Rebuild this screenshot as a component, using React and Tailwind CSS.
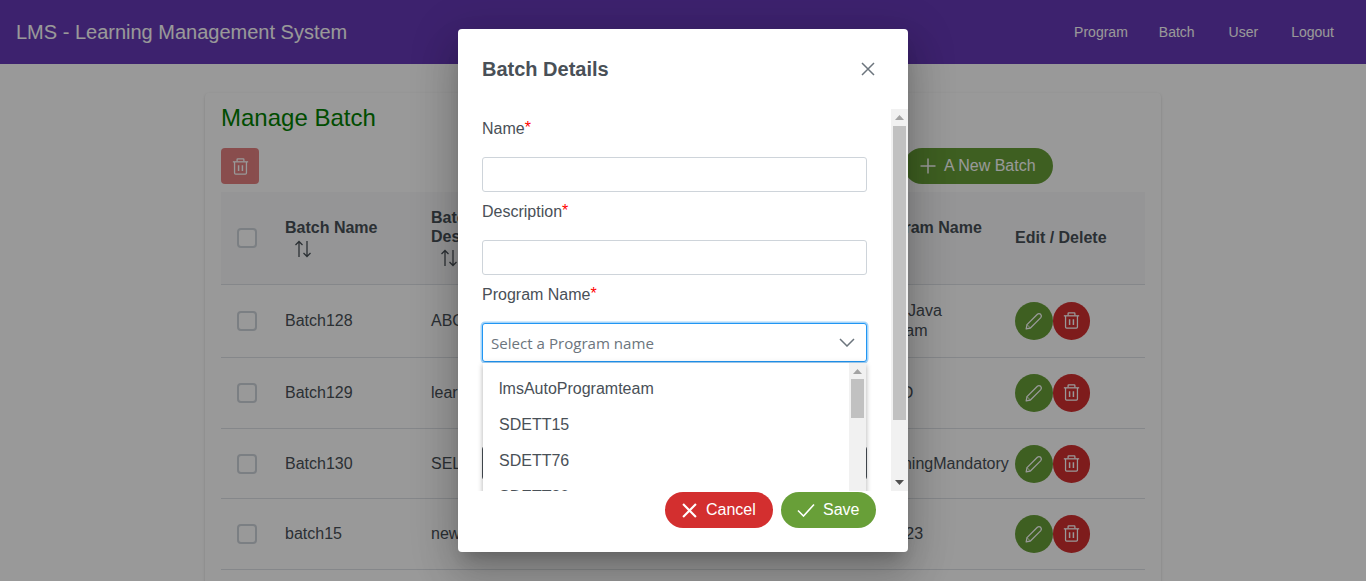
const PencilIcon = () => (
  <svg width="18" height="18" viewBox="0 0 18 18" fill="none" stroke="currentColor" strokeWidth="1.3" strokeLinejoin="round">
    <path d="M1.2 16.8 L2 12.6 L12.4 2.2 Q14 0.9 15.7 2.3 Q17.1 4 15.8 5.6 L5.4 16 Z" />
    <path d="M2 12.6 L5.4 16" strokeWidth="0.8" />
  </svg>
);

const TrashIcon = ({ size = 17 }) => (
  <svg width={size} height={size} viewBox="0 0 16 16" fill="none" stroke="currentColor" strokeWidth="1.2">
    <path d="M0.8 3.6 H15.2" />
    <path d="M4.8 3.4 V1.4 Q4.8 0.8 5.4 0.8 H10.6 Q11.2 0.8 11.2 1.4 V3.4" />
    <path d="M2.4 3.8 V14.2 Q2.4 15.2 3.4 15.2 H12.6 Q13.6 15.2 13.6 14.2 V3.8" />
    <path d="M6.2 6.8 V12.2 M9.8 6.8 V12.2" strokeWidth="1.4" />
  </svg>
);

const SortIcon = () => (
  <svg width="18" height="18" viewBox="0 0 18 18" fill="none" stroke="currentColor" strokeWidth="1.3">
    <path d="M5 17 V1.5 M1.5 5 L5 1.5 L8.5 5" />
    <path d="M13 1 V16.5 M9.5 13 L13 16.5 L16.5 13" />
  </svg>
);

const XIcon = ({ size = 14, width = 1.5 }) => (
  <svg width={size} height={size} viewBox="0 0 14 14" fill="none" stroke="currentColor" strokeWidth={width}>
    <path d="M1 1 L13 13 M13 1 L1 13" />
  </svg>
);

const Checkbox = () => (
  <div className="w-5 h-5 rounded-[4px] border-2 border-[#ced4da] bg-white" />
);

const ActionButtons = () => (
  <div className="flex items-center">
    <button className="w-[38px] h-[38px] rounded-full bg-[#689f38] text-white flex items-center justify-center">
      <PencilIcon />
    </button>
    <button className="w-[37px] h-[38px] rounded-full bg-[#d32f2f] text-white flex items-center justify-center">
      <TrashIcon />
    </button>
  </div>
);

const rows = [
  { name: "Batch128", desc: "ABC", status: "Active", classes: "5", program: <>Adv Java<br />Stream</>, h: "h-[73px]" },
  { name: "Batch129", desc: "learn", status: "Active", classes: "6", program: "MOD", h: "h-[71px]" },
  { name: "Batch130", desc: "SELENIUM", status: "Active", classes: "8", program: "TrainingMandatory", h: "h-[70px] [&>td]:pt-px" },
  { name: "batch15", desc: "new", status: "Active", classes: "4", program: "Test23", h: "h-[71px]" },
  { name: "batch16", desc: "new", status: "Active", classes: "4", program: "Test23", h: "h-[71px]" },
];

const Field = ({ label, children }) => (
  <div>
    <label className="block h-12 pt-[10px] leading-[18px]">
      {label}
      <span className="text-[#ff0000] align-[1px]">*</span>
    </label>
    {children}
  </div>
);

const Arrow = ({ up }) => (
  <svg width="9" height="5" viewBox="0 0 9 5" className={up ? "fill-[#a3a3a3]" : "fill-[#505050]"}>
    <path d={up ? "M0 5 L4.5 0 L9 5 Z" : "M0 0 L9 0 L4.5 5 Z"} />
  </svg>
);

export default function App() {
  return (
    <div className="relative h-[581px] overflow-hidden bg-white font-['Liberation_Sans',Arial,sans-serif] text-[#495057]">
      <nav className="h-16 bg-[#673ab7] flex items-center justify-between pl-4 pr-4 text-white">
        <div className="text-xl leading-none">LMS - Learning Management System</div>
        <div className="flex text-[14px]">
          <a className="px-4 -mr-px">Program</a>
          <a className="px-4 mr-[2px]">Batch</a>
          <a className="px-4 mr-px">User</a>
          <a className="px-4">Logout</a>
        </div>
      </nav>

      <main className="pt-[29px] flex justify-center">
        <section className="w-[956px] bg-white rounded-[4px] shadow-[0_2px_1px_-1px_rgba(0,0,0,0.2),0_1px_1px_0_rgba(0,0,0,0.14),0_1px_3px_0_rgba(0,0,0,0.12)] p-4">
          <h1 className="text-2xl leading-[18px] text-[#008000] h-[39px]">Manage Batch</h1>
          <div className="flex items-center h-9 mb-2">
            <button className="w-[38px] h-9 rounded-[4px] bg-[#d32f2f] text-white opacity-60 flex items-center justify-center">
              <TrashIcon />
            </button>
            <button className="ml-[645px] w-[149px] h-9 rounded-full bg-[#689f38] text-white flex items-center pl-4">
              <svg width="16" height="16" viewBox="0 0 16 16" fill="none" stroke="currentColor" strokeWidth="1.5">
                <path d="M8 0.5 V15.5 M0.5 8 H15.5" />
              </svg>
              <span className="ml-2">A New Batch</span>
            </button>
          </div>

          <table className="w-[924px] table-fixed border-collapse">
            <colgroup>
              <col className="w-[48px]" />
              <col className="w-[146px]" />
              <col className="w-[150px]" />
              <col className="w-[120px]" />
              <col className="w-[175px]" />
              <col className="w-[139px]" />
              <col className="w-[146px]" />
            </colgroup>
            <thead>
              <tr className="h-[92px] bg-[#f8f9fa] border-b border-[#dee2e6] text-left font-bold leading-[19px]">
                <th className="pl-4"><Checkbox /></th>
                <th className="pl-4 font-bold">Batch Name<span className="block ml-[9px] mt-[3px]"><SortIcon /></span></th>
                <th className="pl-4 pr-4 font-bold">Batch Description<span className="block ml-[9px] mt-[3px]"><SortIcon /></span></th>
                <th className="pl-4 pr-4 font-bold">Batch Status<span className="block ml-[9px] mt-[3px]"><SortIcon /></span></th>
                <th className="pl-4 pr-4 font-bold">No Of Classes<span className="block ml-[9px] mt-[3px]"><SortIcon /></span></th>
                <th className="pl-2 font-bold whitespace-nowrap">Program Name<span className="block ml-[9px] mt-[3px]"><SortIcon /></span></th>
                <th className="pl-4 font-bold">Edit / Delete</th>
              </tr>
            </thead>
            <tbody>
              {rows.map((r) => (
                <tr key={r.name} className={`${r.h} border-b border-[#dee2e6]`}>
                  <td className="pl-4"><Checkbox /></td>
                  <td className="pl-4">{r.name}</td>
                  <td className="pl-4">{r.desc}</td>
                  <td className="pl-4">{r.status}</td>
                  <td className="pl-4">{r.classes}</td>
                  <td className="pl-4 leading-5">{r.program}</td>
                  <td className="pl-4"><ActionButtons /></td>
                </tr>
              ))}
            </tbody>
          </table>
        </section>
      </main>

      <div className="absolute inset-0 bg-black/40 flex items-center justify-center">
        <div className="w-[450px] h-[523px] bg-white rounded-[4px] shadow-[0_11px_15px_-7px_rgba(0,0,0,0.2),0_24px_38px_3px_rgba(0,0,0,0.14),0_9px_46px_8px_rgba(0,0,0,0.12)] flex flex-col">
          <header className="h-20 shrink-0 flex items-center justify-between pl-6 pr-[33px]">
            <h2 className="text-xl font-bold">Batch Details</h2>
            <span className="text-[#6c757d]"><XIcon /></span>
          </header>

          <div className="relative flex-1 min-h-0 overflow-hidden pl-6 pr-[41px]">
            <Field label="Name">
              <input className="block w-full h-[35px] rounded-[3px] border border-[#ced4da] bg-white" />
            </Field>
            <Field label="Description">
              <input className="block w-full h-[35px] rounded-[3px] border border-[#ced4da] bg-white" />
            </Field>
            <Field label="Program Name">
              <div className="h-[39px] rounded-[3px] border border-[#2196f3] shadow-[0_0_0_1.5px_#a6d5fa] bg-white flex items-center justify-between pl-2 pr-[11px]">
                <span className="font-['Open_Sans',sans-serif] text-[15.1px] pt-px text-[#6c757d]">Select a Program name</span>
                <svg width="16" height="9" viewBox="0 0 16 9" fill="none" stroke="#6c757d" strokeWidth="1.5">
                  <path d="M1 1 L8 8 L15 1" />
                </svg>
              </div>
            </Field>
            <div className="mt-[84px] h-[34px] rounded-[3px] border border-[#495057]" />

            <div className="absolute left-[25px] top-[254px] w-[383px] h-[200px] bg-white shadow-[0_3px_5px_rgba(0,0,0,0.2),0_0_6px_rgba(0,0,0,0.14)]">
              <ul className="pt-2">
                <li className="h-9 pl-4 flex items-center">lmsAutoProgramteam</li>
                <li className="h-9 pl-4 flex items-center">SDETT15</li>
                <li className="h-9 pl-4 flex items-center">SDETT76</li>
                <li className="h-9 pl-4 flex items-center">SDETT80</li>
              </ul>
              <div className="absolute right-0 top-0 bottom-0 w-[17px] bg-[#f1f1f1]">
                <div className="flex justify-center pt-[6px]"><Arrow up /></div>
                <div className="absolute left-[2px] top-[16px] w-[13px] h-[39px] bg-[#c1c1c1]" />
              </div>
            </div>

            <div className="absolute right-0 top-0 bottom-0 w-[17px] bg-[#f1f1f1]">
              <div className="flex justify-center pt-[6px]"><Arrow up /></div>
              <div className="absolute left-[2px] top-[17px] w-[13px] h-[294px] bg-[#c1c1c1]" />
              <div className="absolute left-0 right-0 bottom-[6px] flex justify-center"><Arrow /></div>
            </div>
          </div>

          <footer className="h-[61px] shrink-0 flex justify-end gap-2 pt-px pr-8">
            <button className="w-[108px] h-9 rounded-full bg-[#d32f2f] text-white flex items-center pl-[17px]">
              <XIcon size={15} width={2} />
              <span className="ml-[9px]">Cancel</span>
            </button>
            <button className="w-[95px] h-9 rounded-full bg-[#689f38] text-white flex items-center pl-4">
              <svg width="18" height="14" viewBox="0 0 18 14" fill="none" stroke="currentColor" strokeWidth="1.6">
                <path d="M1 7.5 L6.5 13 L17 1.5" />
              </svg>
              <span className="ml-2">Save</span>
            </button>
          </footer>
        </div>
      </div>
    </div>
  );
}
